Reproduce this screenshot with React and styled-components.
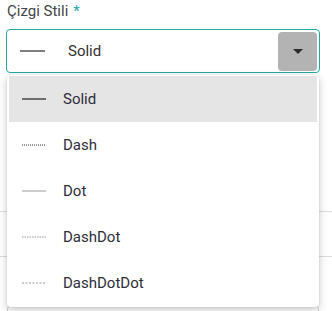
import React from 'react';
import styled, { createGlobalStyle } from 'styled-components';

const GlobalStyle = createGlobalStyle`
  html, body { margin: 0; padding: 0; background: #fff; }
  body { font-family: Roboto, "Noto Sans", sans-serif; }
`;

const Page = styled.div`
  position: relative;
  width: 332px;
  height: 311px;
  overflow: hidden;
  background: #fff;
`;

const Field = styled.div`
  padding: 2px 12px 0 6px;
`;

const Label = styled.div`
  font-size: 15px;
  color: #454545;
  padding-left: 1px;
  height: 27px;
  line-height: 18px;
  span { color: #1fa9a6; margin-left: 5px; }
`;

const SelectBox = styled.div`
  box-sizing: border-box;
  height: 44px;
  border: 1px solid #1fa9a6;
  border-radius: 4px;
  display: flex;
  align-items: center;
  padding: 0 2px 0 13px;
`;

const Value = styled.div`
  flex: 1;
  font-size: 15px;
  color: #333;
  margin-left: 23px;
`;

const ArrowButton = styled.div`
  width: 39px;
  height: 39px;
  border-radius: 4px;
  background: #b3b3b3;
  display: flex;
  align-items: center;
  justify-content: center;
`;

const Caret = styled.div`
  width: 0;
  height: 0;
  border-left: 5px solid transparent;
  border-right: 5px solid transparent;
  border-top: 5px solid #2b2b2b;
`;

const Behind = styled.div`
  margin-top: 138px;
`;

const Row = styled.div`
  height: 44px;
  border-top: 1px solid #dcdcdc;
`;

const LowerBox = styled.div`
  margin: 4px 13px 0 7px;
  height: 30px;
  border: 1px solid #cfcfcf;
  border-radius: 4px;
`;

const Menu = styled.div`
  position: absolute;
  top: 75px;
  left: 7px;
  width: 312px;
  box-sizing: border-box;
  padding: 1px 2px;
  background: #fff;
  border-radius: 4px;
  box-shadow: 0 3px 8px rgba(0, 0, 0, 0.22), 0 0 2px rgba(0, 0, 0, 0.12);
`;

const Item = styled.div`
  height: 46px;
  display: flex;
  align-items: center;
  padding-left: 13px;
  background: ${p => (p.$active ? '#e5e5e5' : 'transparent')};
  font-size: 15px;
  color: #2d2d3a;
`;

const ItemText = styled.span`
  margin-left: 17px;
`;

const LineIcon = ({ dash, color, width = 24, thick = 1.2 }) => (
  <svg width={width} height="4" viewBox={`0 0 ${width} 4`}>
    <line x1="0" y1="2" x2={width} y2="2" stroke={color} strokeWidth={thick} strokeDasharray={dash} />
  </svg>
);

const styles = [
  { name: 'Solid', color: '#1e1e1e', dash: undefined },
  { name: 'Dash', color: '#333', dash: '1 1' },
  { name: 'Dot', color: '#aaa', dash: undefined },
  { name: 'DashDot', color: '#999', dash: '1.5 1' },
  { name: 'DashDotDot', color: '#999', dash: '2 1.5' },
];

export default function App() {
  return (
    <Page>
      <GlobalStyle />
      <Field>
        <Label>Çizgi Stili<span>*</span></Label>
        <SelectBox>
          <LineIcon color="#555" width={25} thick={1.5} />
          <Value>Solid</Value>
          <ArrowButton><Caret /></ArrowButton>
        </SelectBox>
      </Field>
      <Behind>
        <Row />
        <Row />
        <LowerBox />
      </Behind>
      <Menu>
        {styles.map((s, i) => (
          <Item key={s.name} $active={i === 0}>
            <LineIcon color={s.color} dash={s.dash} />
            <ItemText>{s.name}</ItemText>
          </Item>
        ))}
      </Menu>
    </Page>
  );
}
